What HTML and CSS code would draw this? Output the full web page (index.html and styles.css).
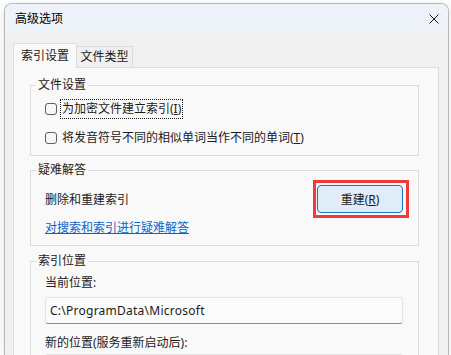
FILE: index.html
```html
<!DOCTYPE html>
<html lang="zh-CN">
<head>
    <meta charset="UTF-8">
    <title>高级选项</title>
    <link rel="stylesheet" href="styles.css">
</head>
<body>
    <div class="window">
        <div class="titlebar">
            <span class="title">高级选项</span>
            <svg class="close-icon" width="10" height="10" viewBox="0 0 10 10">
                <path d="M0.5 0.5 L9.5 9.5 M9.5 0.5 L0.5 9.5" stroke="#1a1a1a" stroke-width="1" fill="none"/>
            </svg>
        </div>

        <div class="content">
            <div class="tabs">
                <div class="tab active">索引设置</div>
                <div class="tab">文件类型</div>
            </div>

            <div class="tab-panel">
                <fieldset class="group group-files">
                    <legend>文件设置</legend>
                    <label class="check-row">
                        <span class="checkbox"></span>
                        <span class="check-label focused">为加密文件建立索引(<u>I</u>)</span>
                    </label>
                    <label class="check-row">
                        <span class="checkbox"></span>
                        <span class="check-label">将发音符号不同的相似单词当作不同的单词(<u>T</u>)</span>
                    </label>
                </fieldset>

                <fieldset class="group group-trouble">
                    <legend>疑难解答</legend>
                    <div class="rebuild-row">
                        <span>删除和重建索引</span>
                        <span class="highlight">
                            <button class="rebuild-button">重建(<u>R</u>)</button>
                        </span>
                    </div>
                    <a class="help-link" href="#">对搜索和索引进行疑难解答</a>
                </fieldset>

                <fieldset class="group group-location">
                    <legend>索引位置</legend>
                    <div class="field-label">当前位置:</div>
                    <div class="path-box">C:\ProgramData\Microsoft</div>
                    <div class="field-label new-location">新的位置(服务重新启动后):</div>
                    <div class="path-box next"></div>
                </fieldset>
            </div>
        </div>
    </div>
</body>
</html>
```

FILE: styles.css
```css
:root {
    --window-bg: #f0f0f0;
    --title-bg: #eef3f9;
    --panel-bg: #f9f9f9;
    --line-color: #dcdcdc;
    --text-color: #1a1a1a;
    --link-color: #0b63c5;
}

* {
    box-sizing: border-box;
}

body {
    margin: 0;
    background-color: #ffffff;
    font-family: "Noto Sans", "Noto Sans CJK SC", sans-serif;
    font-size: 12px;
    color: var(--text-color);
    overflow: hidden;
}

.window {
    width: 445px;
    height: 352px;
    margin: 3px 0 0 4px;
    background-color: var(--window-bg);
    border: 1px solid #b9b9b9;
    border-bottom: none;
    border-radius: 8px 8px 0 0;
    box-shadow: 0 2px 8px rgba(0,0,0,0.12);
    overflow: hidden;
}

.titlebar {
    height: 29px;
    display: flex;
    justify-content: space-between;
    align-items: center;
    padding: 0 9px 0 10px;
    background-color: var(--title-bg);
}

.title {
    line-height: 16px;
    color: #000;
}

.content {
    padding: 10px 9px 0 8px;
}

/* tabs */
.tabs {
    display: flex;
    align-items: flex-end;
    margin-bottom: -1px;
}

.tab {
    height: 22px;
    width: 56px;
    display: flex;
    align-items: center;
    justify-content: center;
    border: 1px solid var(--line-color);
    border-left: none;
    background-color: var(--window-bg);
    line-height: 16px;
}

.tab.active {
    position: relative;
    z-index: 1;
    width: 64px;
    height: 25px;
    padding-bottom: 1px;
    border-left: 1px solid var(--line-color);
    border-bottom: none;
    background-color: var(--panel-bg);
}

.tab-panel {
    height: 300px;
    padding: 0 19px 0 16px;
    background-color: var(--panel-bg);
    border: 1px solid var(--line-color);
}

/* group boxes */
.group {
    margin: 0;
    padding: 0 9px 0 14px;
    border: 1px solid var(--line-color);
    min-width: 0;
}

.group legend {
    margin-left: -9px;
    padding: 0 2px;
    line-height: 16px;
}

.group-files {
    margin-top: 9px;
    padding-top: 6px;
    padding-bottom: 7px;
}

.group-trouble {
    margin-top: 6px;
    padding-top: 2px;
    padding-bottom: 9px;
}

.group-location {
    margin-top: 7px;
    padding-top: 6px;
}

.check-row {
    display: flex;
    align-items: center;
    height: 20px;
}

.check-row + .check-row {
    margin-top: 9px;
}

.checkbox {
    width: 12px;
    height: 12px;
    border: 1px solid #5f5f5f;
    border-radius: 3px;
    background-color: #f7f7f7;
    margin-right: 3px;
}

.check-label {
    height: 20px;
    padding: 0 1px;
    line-height: 18px;
    border: 1px dotted transparent;
}

.check-label.focused {
    border-color: #1a1a1a;
}

.rebuild-row {
    display: flex;
    justify-content: space-between;
    align-items: center;
    height: 38px;
}

.highlight {
    display: flex;
    padding: 2px 3px 2px 1px;
    border: 3px solid #f23a3a;
}

.rebuild-button {
    width: 86px;
    height: 28px;
    padding: 0;
    font: inherit;
    color: var(--text-color);
    background-color: #e0edf9;
    border: 1px solid #1f73c6;
    border-radius: 4px;
}

.help-link {
    display: inline-block;
    margin-top: 2px;
    line-height: 16px;
    color: var(--link-color);
    text-decoration: underline;
}

.field-label {
    line-height: 16px;
}

.path-box {
    height: 27px;
    margin: 6px 6px 0 0;
    padding: 0 4px;
    line-height: 25px;
    letter-spacing: 0.25px;
    background-color: #fbfbfb;
    border: 1px solid #e3e3e3;
    border-bottom: 1px solid #8a8a8a;
    border-radius: 3px;
}

.new-location {
    margin-top: 11px;
}

.path-box.next {
    margin-top: 3px;
}
```
